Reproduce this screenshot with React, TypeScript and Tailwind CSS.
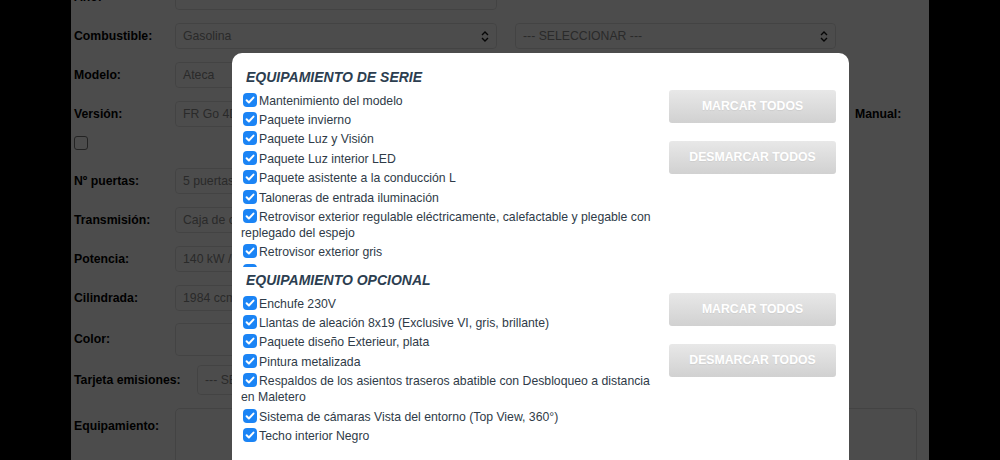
import React from "react";

const serie = [
  "Mantenimiento del modelo",
  "Paquete invierno",
  "Paquete Luz y Visión",
  "Paquete Luz interior LED",
  "Paquete asistente a la conducción L",
  "Taloneras de entrada iluminación",
  "Retrovisor exterior regulable eléctricamente, calefactable y plegable con replegado del espejo",
  "Retrovisor exterior gris",
  "Sensor de aparcamiento trasero",
  "Volante multifunción de cuero",
];

const opcional = [
  "Enchufe 230V",
  "Llantas de aleación 8x19 (Exclusive VI, gris, brillante)",
  "Paquete diseño Exterieur, plata",
  "Pintura metalizada",
  "Respaldos de los asientos traseros abatible con Desbloqueo a distancia en Maletero",
  "Sistema de cámaras Vista del entorno (Top View, 360°)",
  "Techo interior Negro",
];

function Chevrons() {
  return (
    <svg width="8" height="11" viewBox="0 0 8 11" fill="none" stroke="#111" strokeWidth="1.4">
      <path d="M1 4l3-3 3 3" />
      <path d="M1 7l3 3 3-3" />
    </svg>
  );
}

function Field({ value, select, className }: { value: string; select?: boolean; className: string }) {
  return (
    <div
      className={`flex items-center justify-between rounded-[4px] border border-[#e2e2e2] bg-white px-[7px] text-[#8c8c8c] whitespace-nowrap overflow-hidden ${className}`}
    >
      <span>{value}</span>
      {select && <Chevrons />}
    </div>
  );
}

function Row({ label, children, className = "" }: { label: string; children: React.ReactNode; className?: string }) {
  return (
    <div className={`flex items-center ${className}`}>
      <div className="w-[101px] shrink-0 font-bold text-black">{label}</div>
      {children}
    </div>
  );
}

function Check() {
  return (
    <span className="inline-block w-[14px] h-[14px] ml-[2px] mr-[2px] rounded-[4px] bg-[#1b84f5] align-[-2px]">
      <svg width="14" height="14" viewBox="0 0 14 14" fill="none" stroke="white" strokeWidth="2" strokeLinecap="round" strokeLinejoin="round">
        <path d="M3.6 7.2l2.3 2.3L10.5 4.6" />
      </svg>
    </span>
  );
}

function Item({ text }: { text: string }) {
  return (
    <div className="py-[1.7px] leading-[16px]">
      <Check />
      {text}
    </div>
  );
}

function GrayButton({ label }: { label: string }) {
  return (
    <div className="flex h-[33px] items-center justify-center rounded-[3px] bg-gradient-to-b from-[#e8e8e8] to-[#d1d1d1] font-bold text-white [text-shadow:0_1px_1px_rgba(0,0,0,0.06)]">
      {label}
    </div>
  );
}

function Section({ title, items, clip }: { title: string; items: string[]; clip?: boolean }) {
  return (
    <div>
      <h3 className="ml-[5px] mb-[5px] text-[14px] leading-[17px] font-bold italic text-[#2c3e50]">{title}</h3>
      <div className="flex gap-[8px]">
        <div className={`w-[420px] text-[#2f3b48] ${clip ? "h-[176px] overflow-hidden" : ""}`}>
          {items.map((t) => (
            <Item key={t} text={t} />
          ))}
        </div>
        <div className="-mt-[1px] flex w-[167px] flex-col gap-[18px]">
          <GrayButton label="MARCAR TODOS" />
          <GrayButton label="DESMARCAR TODOS" />
        </div>
      </div>
    </div>
  );
}

export default function App() {
  return (
    <div className="relative h-[460px] overflow-hidden bg-black font-['Liberation_Sans',Arial,sans-serif] text-[12.25px]">
      {/* page under the dialog */}
      <div className="mx-auto flex h-full w-[858px] flex-col bg-white pl-[3px]">
        <Row label="Año:" className="-mt-[16px] h-[26px] mb-[13px] shrink-0">
          <Field value="" className="h-[26px] w-[322px]" />
        </Row>
        <Row label="Combustible:" className="h-[26px] mb-[13px] shrink-0">
          <Field value="Gasolina" select className="h-[26px] w-[322px]" />
          <Field value="--- SELECCIONAR ---" select className="ml-[18px] h-[26px] w-[321px]" />
        </Row>
        <Row label="Modelo:" className="h-[26px] mb-[13px] shrink-0">
          <Field value="Ateca" className="h-[26px] w-[661px]" />
        </Row>
        <Row label="Versión:" className="h-[26px] mb-[9px] shrink-0">
          <Field value="FR Go 4Drive 2.0 TSI 190 CV DSG" className="h-[26px] w-[661px]" />
          <div className="ml-[19px] font-bold text-black">Manual:</div>
        </Row>
        <div className="mb-[18px] h-[14px] shrink-0">
          <span className="block h-[14px] w-[14px] rounded-[3px] border border-[#767676] bg-white" />
        </div>
        <Row label="Nº puertas:" className="h-[26px] mb-[13px] shrink-0">
          <Field value="5 puertas" className="h-[26px] w-[661px]" />
        </Row>
        <Row label="Transmisión:" className="h-[26px] mb-[13px] shrink-0">
          <Field value="Caja de cambios automática DSG" className="h-[26px] w-[661px]" />
        </Row>
        <Row label="Potencia:" className="h-[26px] mb-[13px] shrink-0">
          <Field value="140 kW / 190 CV" className="h-[26px] w-[661px]" />
        </Row>
        <Row label="Cilindrada:" className="h-[26px] mb-[12px] shrink-0">
          <Field value="1984 ccm" className="h-[26px] w-[661px]" />
        </Row>
        <Row label="Color:" className="h-[33px] mb-[9px] shrink-0">
          <Field value="" className="h-[33px] w-[661px]" />
        </Row>
        <div className="mb-[13px] flex h-[30px] shrink-0 items-center">
          <div className="w-[123px] shrink-0 font-bold text-black">Tarjeta emisiones:</div>
          <Field value="--- SELECCIONAR ---" select className="h-[30px] w-[300px]" />
        </div>
        <div className="flex shrink-0 items-start">
          <div className="w-[101px] shrink-0 pt-[9px] font-bold text-black">Equipamiento:</div>
          <div className="h-[90px] w-[742px] rounded-[5px] border border-[#e2e2e2] bg-white" />
        </div>
      </div>

      {/* dim layer */}
      <div className="absolute inset-0 bg-black/70" />

      {/* dialog */}
      <div className="absolute left-[232px] top-[53px] h-[430px] w-[617px] rounded-[10px] bg-white pl-[9px] pt-[16px]">
        <Section title="EQUIPAMIENTO DE SERIE" items={serie} clip />
        <div className="mt-[5px]">
          <Section title="EQUIPAMIENTO OPCIONAL" items={opcional} />
        </div>
      </div>
    </div>
  );
}
